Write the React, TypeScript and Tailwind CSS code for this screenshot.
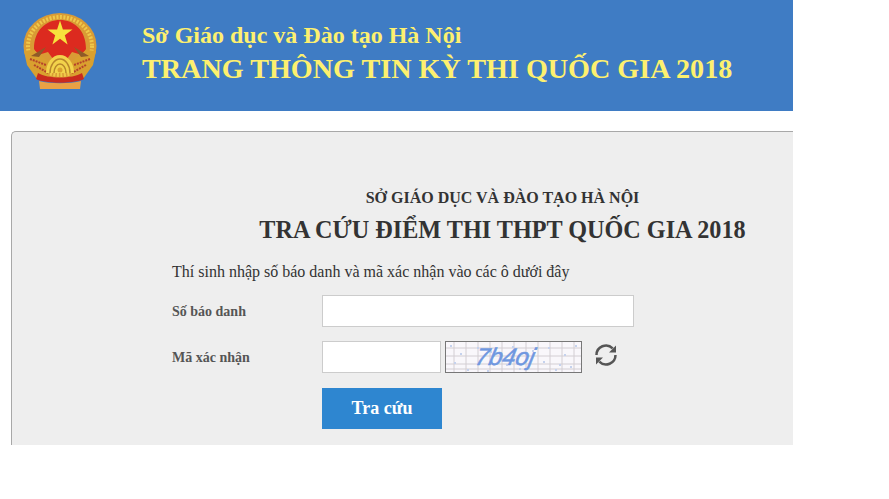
const serif = "font-['Liberation_Serif','Noto_Serif',serif]";

function Emblem() {
  return (
    <svg width="78" height="80" viewBox="0 0 78 80" className="shrink-0">
      {/* wreath */}
      <ellipse cx="38" cy="33" rx="36.500" ry="33" fill="#d99b35" />
      <ellipse cx="38" cy="33" rx="32" ry="29" fill="none" stroke="#efc94a" strokeWidth="4" strokeDasharray="2 1.500" />
      <path d="M12 36 C12 17 24 7 38 7 C52 7 64 17 64 36 L60 42 L50 39 L45 46 H31 L26 39 L16 42 Z" fill="#dc2a1f" />
      <polygon
        points="38,7.500 40.900,16.500 50.500,16.500 42.800,22.200 45.600,31.500 38,25.700 30.400,31.500 33.200,22.200 25.500,16.500 35.100,16.500"
        fill="#f7e23c"
      />
      {/* leaves */}
      <path d="M2 38 L12 37 L27 49 L27 66 L15 66 L5 52 Z" fill="#d9a02f" />
      <path d="M74 38 L64 37 L49 49 L49 66 L61 66 L71 52 Z" fill="#d9a02f" />
      <path d="M9 43 L24 34 L17 44 Z M67 43 L52 34 L59 44 Z" fill="#8f5a28" />
      <path d="M8 46 L24 52 M12 52 L26 60 M68 46 L52 52 M64 52 L50 60" stroke="#b5412a" strokeWidth="2" strokeDasharray="2 1" />
      {/* gear */}
      <path d="M24 60 A14 18 0 0 1 52 60 Z" fill="#f2d24b" />
      <path d="M28 60 A10 14 0 0 1 48 60 M32 60 A6 9 0 0 1 44 60" fill="none" stroke="#b8862b" strokeWidth="1.500" />
      <circle cx="38" cy="57" r="2.500" fill="#d9a02f" />
      {/* ribbon */}
      <path d="M16 60 C26 66 50 66 60 60 L62 66 C52 71 24 71 14 66 Z" fill="#c92a1e" />
      <path d="M17 68 C28 71 48 71 59 68 L58 76 H18 Z" fill="#e9a145" />
    </svg>
  );
}

function Captcha() {
  const xs = [8, 20, 32, 44, 56, 68, 80, 92, 104, 116, 128];
  const ys = [6, 14, 22, 27];
  const dots = [
    [4, 3], [14, 11], [31, 5], [44, 9], [60, 22], [21, 27], [8, 20], [73, 26], [102, 5], [118, 12],
    [97, 19], [109, 27], [124, 24], [129, 3], [86, 8], [41, 28], [66, 4], [113, 22],
  ];
  return (
    <div className="relative h-8 w-[137px] border border-[#777] bg-[#f9f7fb]">
      <svg width="135" height="30" className="absolute inset-0">
        {xs.map((x) => (
          <line key={x} x1={x} x2={x} y1="0" y2="30" stroke="#d3ced3" strokeWidth="1" />
        ))}
        {ys.map((y) => (
          <line key={y} x1="0" x2="135" y1={y} y2={y} stroke="#d3ced3" strokeWidth="1" />
        ))}
        {dots.map(([x, y]) => (
          <rect key={`${x}-${y}`} x={x} y={y} width="2" height="2" fill="#c5d2ee" />
        ))}
      </svg>
      <span className="absolute left-[30px] top-px -skew-x-12 font-['Liberation_Sans',sans-serif] text-[24px] leading-7 italic text-[#6f97e0] [-webkit-text-stroke:0.5px_#6f97e0]">
        7b4oj
      </span>
    </div>
  );
}

function RefreshIcon() {
  return (
    <svg width="24" height="24" viewBox="0 0 24 24" fill="none" className="mb-[5px] ml-[12px]">
      <path d="M2.500 12 A9.500 9.500 0 0 1 18.700 5.300" stroke="#555" strokeWidth="2.500" />
      <path d="M21.500 12 A9.500 9.500 0 0 1 5.300 18.700" stroke="#555" strokeWidth="2.500" />
      <path d="M22 2.500 V9.500 H15 Z" fill="#555" />
      <path d="M2 21.500 V14.500 H9 Z" fill="#555" />
    </svg>
  );
}

function Label({ children }: { children: string }) {
  return <label className="w-[150px] text-[14px] font-bold text-[#555]">{children}</label>;
}

export default function App() {
  return (
    <div className={`h-[499px] w-[889px] overflow-hidden bg-white ${serif}`}>
      <div className="w-[793px] overflow-hidden">
        <header className="flex h-[111px] items-start bg-[#3f7cc4] pl-[22px] pt-[13px]">
          <Emblem />
          <div className="ml-[42px] mt-[10px] font-bold text-[#fdf06f]">
            <div className="text-[24px] leading-[25px]">Sở Giáo dục và Đào tạo Hà Nội</div>
            <div className="mt-[5px] text-[28.150px] leading-[32px]">TRANG THÔNG TIN KỲ THI QUỐC GIA 2018</div>
          </div>
        </header>

        <main className="ml-[11px] mt-5 h-[314px] w-[982px] rounded-tl-[5px] border-l border-t border-[#a8a8a8] bg-[#eeeeee] pt-[56px] text-[#333]">
          <div className="text-center">
            <h2 className="text-[16px] leading-5 font-bold">SỞ GIÁO DỤC VÀ ĐÀO TẠO HÀ NỘI</h2>
            <h1 className="mt-[7px] text-[24.200px] leading-[30px] font-bold">TRA CỨU ĐIỂM THI THPT QUỐC GIA 2018</h1>
          </div>
          <div className="ml-[160px] mt-[17px]">
            <p className="text-[16px] leading-5">Thí sinh nhập số báo danh và mã xác nhận vào các ô dưới đây</p>
            <div className="mt-[13px] flex items-center">
              <Label>Số báo danh</Label>
              <input className="h-8 w-[312px] border border-[#ccc] bg-white" />
            </div>
            <div className="mt-[14px] flex items-center">
              <Label>Mã xác nhận</Label>
              <input className="h-8 w-[119px] border border-[#ccc] bg-white" />
              <div className="ml-[4px] flex items-center">
                <Captcha />
                <RefreshIcon />
              </div>
            </div>
            <button className="ml-[150px] mt-[15px] h-[41px] w-[120px] bg-[#2e86d0] text-[18px] font-bold text-white">
              Tra cứu
            </button>
          </div>
        </main>
      </div>
    </div>
  );
}
